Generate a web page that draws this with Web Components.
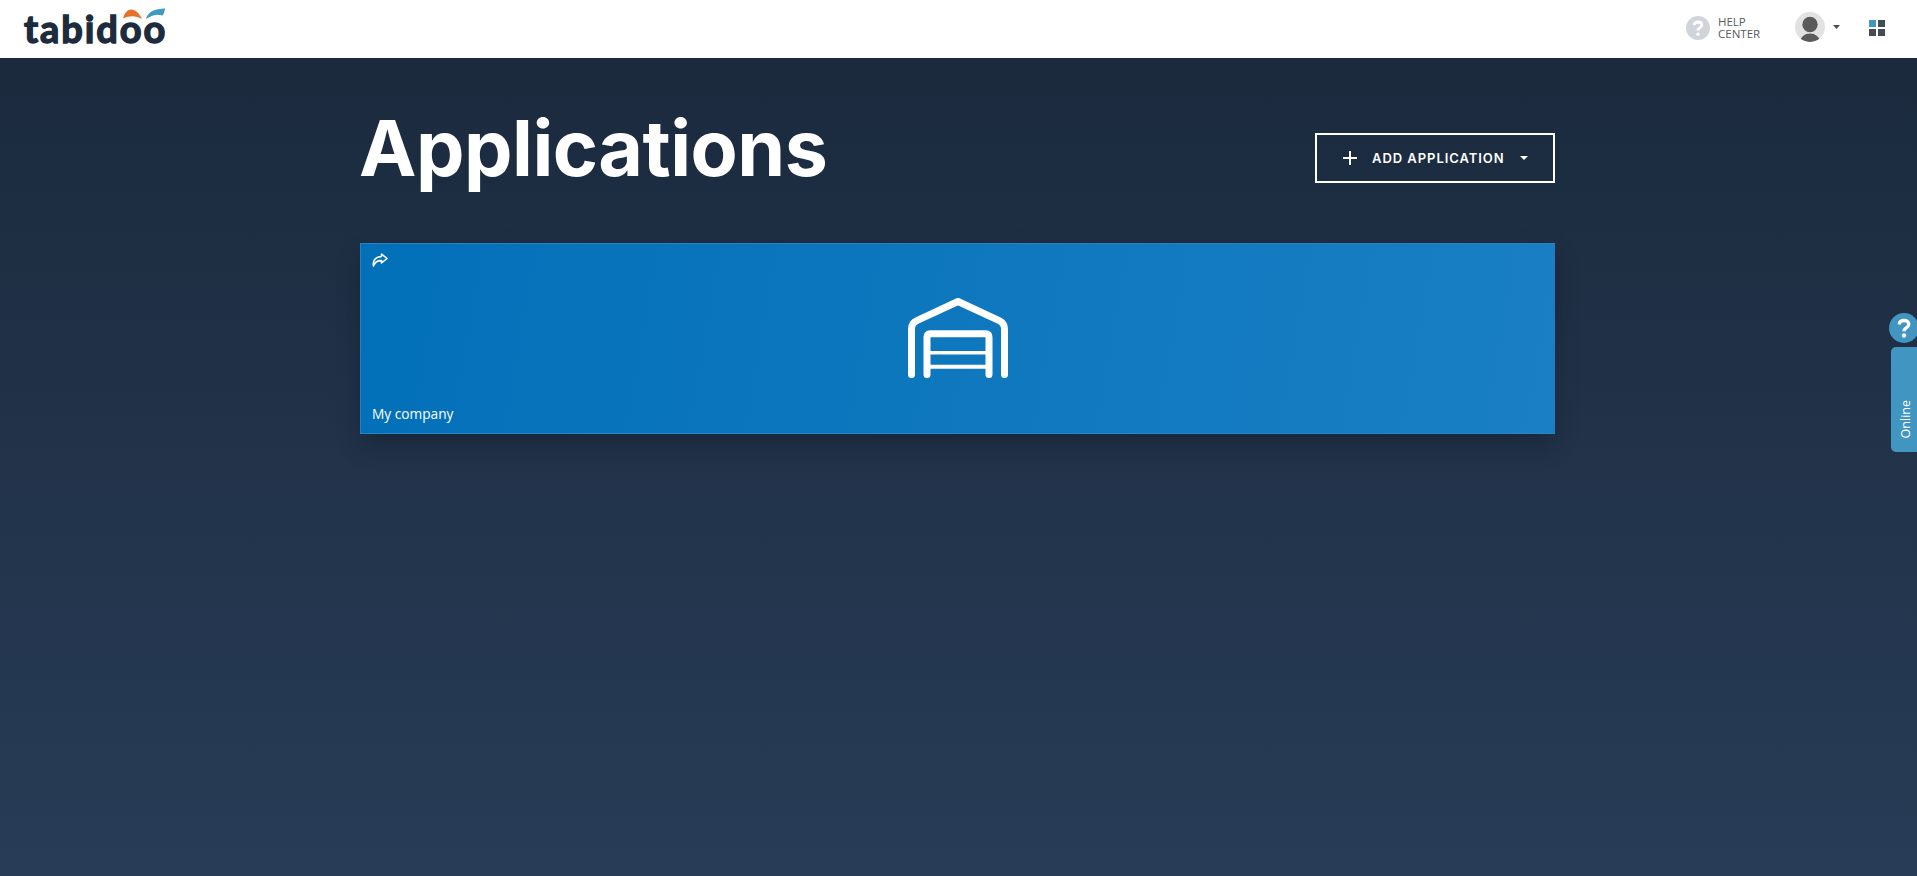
<!DOCTYPE html>
<html>
<head>
<meta charset="utf-8">
<title>Applications</title>
<style>
  html, body { margin: 0; height: 100%; }
  body { font-family: "Open Sans", sans-serif; overflow: hidden; }
</style>
</head>
<body>
<app-shell>
  <top-bar></top-bar>
  <page-heading>Applications</page-heading>
  <app-card>My company</app-card>
  <side-widget></side-widget>
</app-shell>
<script>
class AppShell extends HTMLElement {
  connectedCallback() {
    this.attachShadow({ mode: 'open' });
    this.shadowRoot.innerHTML = `
      <style>
        :host {
          display: block;
          position: relative;
          height: 876px;
          overflow: hidden;
          background: linear-gradient(180deg, #1b2a3d 58px, #283c57 100%);
        }
      </style>
      <slot></slot>
    `;
  }
}

class TopBar extends HTMLElement {
  connectedCallback() {
    this.attachShadow({ mode: 'open' });
    this.shadowRoot.innerHTML = `
      <style>
        :host {
          display: flex;
          align-items: center;
          height: 58px;
          padding: 0 32px 2px 24px;
          background: #fff;
          box-sizing: border-box;
        }
        .logo { position: relative; width: 144px; height: 44px; }
        .word {
          font: 700 38px/44px "Lato", sans-serif;
          color: #1c2b3d;
          letter-spacing: 1.9px;
          -webkit-text-stroke: 1.4px #1c2b3d;
        }
        .drops { position: absolute; left: 98px; top: 2px; }
        .help { display: flex; align-items: center; gap: 8px; margin-left: auto; }
        .help-text { font-size: 11.5px; line-height: 12px; color: #555b63; width: 50px; }
        .user { display: flex; align-items: center; margin: -2px 0 0 27px; }
        .caret { margin-left: 8px; }
        .grid { margin-left: 29px; display: block; }
      </style>
      <div class="logo">
        <span class="word">tabidoo</span>
        <svg class="drops" width="44" height="12" viewBox="0 0 44 12">
          <path d="M1 10.500C2.500 5 5.500 1.500 9 1.500c4.500 0 8.500 4 11 9.500-3.500-1.800-6.500-2.800-9.500-2.800-3 0-6.500.8-9.500 2.300z" fill="#e8702a"/>
          <path d="M24 11c1.200-4.500 4.500-7.800 9-9 2.500-.7 6-1.200 10-1.800-.3 3-1 5.300-2.500 7.300-4-1-7-1-10 .2-2.500 1-4.500 2-6.500 3.300z" fill="#3e9ac4"/>
        </svg>
      </div>
      <div class="help">
        <svg width="24" height="24" viewBox="0 0 24 24">
          <circle cx="12" cy="12" r="12" fill="#d0d5dc"/>
          <path d="M8.200 9.200c.2-2 1.800-3.200 3.900-3.200 2.200 0 3.700 1.200 3.700 3 0 2.600-3.800 2.800-3.800 5.500" fill="none" stroke="#fff" stroke-width="2.800"/>
          <circle cx="12" cy="18.200" r="1.700" fill="#fff"/>
        </svg>
        <div class="help-text">HELP<br>CENTER</div>
      </div>
      <div class="user">
        <svg width="30" height="30" viewBox="0 0 30 30">
          <defs><clipPath id="av"><circle cx="15" cy="15" r="15"/></clipPath></defs>
          <circle cx="15" cy="15" r="15" fill="#e2e2e2"/>
          <g clip-path="url(#av)" fill="#5b5b5b">
            <circle cx="15" cy="12.500" r="7.700"/>
            <ellipse cx="15" cy="30" rx="10" ry="8.500"/>
          </g>
        </svg>
        <svg class="caret" width="7" height="4" viewBox="0 0 7 4"><path d="M0 0h7L3.500 4z" fill="#4a4f57"/></svg>
      </div>
      <svg class="grid" width="16" height="16" viewBox="0 0 16 16">
        <rect width="7" height="7" fill="#3f96c1"/>
        <rect x="9" width="7" height="7" fill="#444c57"/>
        <rect y="9" width="7" height="7" fill="#444c57"/>
        <rect x="9" y="9" width="7" height="7" fill="#444c57"/>
      </svg>
    `;
  }
}

class PageHeading extends HTMLElement {
  connectedCallback() {
    this.attachShadow({ mode: 'open' });
    this.shadowRoot.innerHTML = `
      <style>
        :host {
          display: flex;
          justify-content: space-between;
          align-items: flex-start;
          width: 1195px;
          height: 185px;
          margin-left: 360px;
          box-sizing: border-box;
          padding-top: 45px;
        }
        h1 {
          margin: 0 0 0 -1px;
          font: 700 77px/90px "Inter", sans-serif;
          letter-spacing: -0.5px;
          color: #fff;
        }
      </style>
      <h1><slot></slot></h1>
      <add-button>ADD APPLICATION</add-button>
    `;
  }
}

class AddButton extends HTMLElement {
  connectedCallback() {
    this.attachShadow({ mode: 'open' });
    this.shadowRoot.innerHTML = `
      <style>
        :host {
          display: flex;
          align-items: center;
          box-sizing: border-box;
          width: 240px;
          height: 50px;
          margin-top: 30px;
          padding-left: 26px;
          border: 2px solid #fff;
          color: #fff;
          font: 600 13px "Inter", sans-serif;
          letter-spacing: 0.95px;
        }
        .label { margin-left: 15px; white-space: nowrap; }
        .caret { margin-left: 15px; }
      </style>
      <svg width="14" height="14" viewBox="0 0 14 14"><path d="M6 0h2v6h6v2H8v6H6V8H0V6h6z" fill="#fff"/></svg>
      <span class="label"><slot></slot></span>
      <svg class="caret" width="8" height="4" viewBox="0 0 8 4"><path d="M0 0h8L4 4z" fill="#fff"/></svg>
    `;
  }
}

class AppCard extends HTMLElement {
  connectedCallback() {
    this.attachShadow({ mode: 'open' });
    this.shadowRoot.innerHTML = `
      <style>
        :host {
          display: flex;
          flex-direction: column;
          box-sizing: border-box;
          width: 1195px;
          height: 191px;
          margin-left: 360px;
          padding: 9px 12px 9px 11px;
          background: linear-gradient(100deg, #0270b9 0%, #1a7fc4 100%);
          border-left: 1px solid #2a7fc0;
          border-top: 1px solid #2a7fc0;
          border-bottom: 1px solid #2a86c6;
          color: #fff;
          box-shadow: 0 12px 24px -4px rgba(10, 18, 30, 0.4);
        }
        .share { display: block; }
        .garage { display: block; align-self: center; margin-top: 31px; }
        .name { margin-top: auto; font-size: 13.7px; line-height: 20px; }
      </style>
      <svg class="share" width="16" height="14" viewBox="0 0 16 14">
        <path d="M9.500 1 15 5.500 9.500 10V7.600C6 7.400 3 8.500 1.500 13 .5 8 3 3.700 9.500 3.500z" fill="none" stroke="#fff" stroke-width="1.600" stroke-linejoin="round"/>
      </svg>
      <svg class="garage" width="100" height="80" viewBox="0 0 100 80" fill="none" stroke="#fff" stroke-width="7" stroke-linecap="round" stroke-linejoin="round">
        <path d="M3.500 76.500V31c0-4 1.800-6.800 5.300-8.400L50 3.500l41.200 19.100c3.500 1.600 5.300 4.400 5.300 8.400v45.500"/>
        <path d="M19 76.500V39c0-2 1-3.300 3-3.300h56c2 0 3 1.300 3 3.300v37.500"/>
        <path d="M19 54.700h62" stroke-width="3.500"/>
        <path d="M19 68.700h62" stroke-width="4"/>
      </svg>
      <div class="name"><slot></slot></div>
    `;
  }
}

class SideWidget extends HTMLElement {
  connectedCallback() {
    this.attachShadow({ mode: 'open' });
    this.shadowRoot.innerHTML = `
      <style>
        :host {
          position: absolute;
          right: -2px;
          top: 313px;
          width: 30px;
          display: flex;
          flex-direction: column;
          align-items: flex-end;
          gap: 4px;
        }
        .tab {
          box-sizing: border-box;
          width: 28px;
          height: 105px;
          display: flex;
          align-items: flex-end;
          justify-content: center;
          padding: 0 0 14px 1px;
          background: #4095c1;
          border-radius: 5px 0 0 5px;
          color: #fff;
          font-size: 12.500px;
        }
        .tab span { writing-mode: vertical-rl; transform: rotate(180deg); }
        svg { display: block; }
      </style>
      <svg width="30" height="30" viewBox="0 0 30 30">
        <circle cx="15" cy="15" r="15" fill="#4095c1"/>
        <path d="M10.200 11.500c.2-2.600 2.200-4 4.900-4 2.800 0 4.700 1.500 4.700 3.800 0 3.300-4.800 3.500-4.800 6.900" fill="none" stroke="#fff" stroke-width="3.300"/>
        <circle cx="15" cy="22.500" r="2.200" fill="#fff"/>
      </svg>
      <div class="tab"><span>Online</span></div>
    `;
  }
}

customElements.define('app-shell', AppShell);
customElements.define('top-bar', TopBar);
customElements.define('page-heading', PageHeading);
customElements.define('add-button', AddButton);
customElements.define('app-card', AppCard);
customElements.define('side-widget', SideWidget);
</script>
</body>
</html>
